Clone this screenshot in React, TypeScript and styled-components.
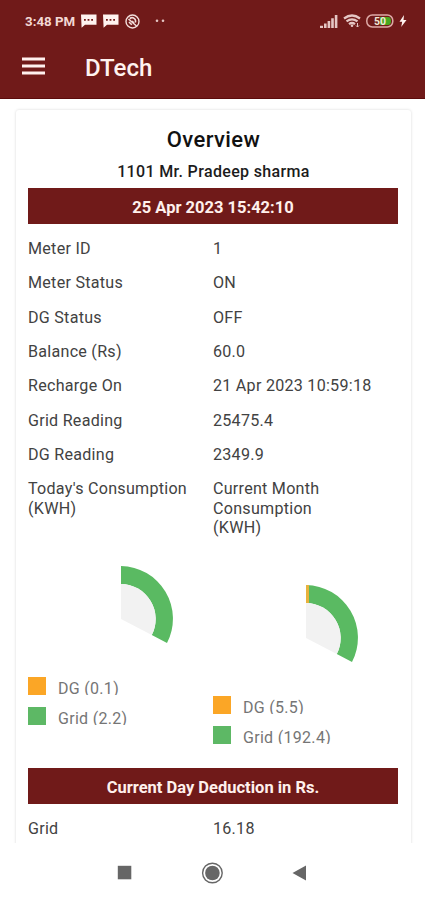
import React from "react";
import styled, { createGlobalStyle } from "styled-components";

const maroon = "#701a19";

const GlobalStyle = createGlobalStyle`
  * { box-sizing: border-box; }
  body { margin: 0; background: #fff; font-family: Roboto, sans-serif; }
`;

const Screen = styled.div`
  width: 425px;
  height: 900px;
  display: flex;
  flex-direction: column;
  overflow: hidden;
  background: #fff;
`;

const Header = styled.header`
  height: 99px;
  flex: none;
  background: ${maroon};
  border-bottom: 1px solid #5c0c0c;
  color: #fff3f0;
`;

const StatusBar = styled.div`
  height: 42px;
  padding: 0 18px 0 25px;
  display: flex;
  align-items: center;
  justify-content: space-between;
`;

const StatusGroup = styled.div<{ $gap: number }>`
  display: flex;
  align-items: center;
  gap: ${(p) => p.$gap}px;
  svg { display: block; }
`;

const Clock = styled.span`
  font-size: 13.3px;
  font-weight: 700;
  line-height: 16px;
  padding-top: 1px;
  color: #f3d8d4;
`;

const Toolbar = styled.div`
  display: flex;
  align-items: center;
  height: 50px;
  padding-left: 22px;
  gap: 40px;
  svg { display: block; margin-bottom: 2px; }
`;

const AppTitle = styled.h1`
  margin: 0;
  padding-top: 1px;
  font-size: 24px;
  line-height: 28px;
  font-weight: 500;
`;

const Content = styled.main`
  height: 744px;
  flex: none;
  padding: 11px 14px 0 16px;
  overflow: hidden;
`;

const Card = styled.section`
  height: 800px;
  padding: 16px 12px 0;
  border-radius: 3px;
  box-shadow: 0 0 3px rgba(0, 0, 0, 0.16);
`;

const CardTitle = styled.h2`
  margin: 0;
  font-size: 22px;
  line-height: 28px;
  font-weight: 500;
  letter-spacing: 0.4px;
  text-align: center;
  color: #111;
`;

const Owner = styled.div`
  margin-top: 8px;
  font-size: 16px;
  line-height: 20px;
  font-weight: 500;
  letter-spacing: 0.35px;
  text-align: center;
  color: #1c1c1c;
`;

const Band = styled.div`
  width: 370px;
  height: 36px;
  background: ${maroon};
  color: #fff0ec;
  font-size: 16.5px;
  line-height: 39px;
  font-weight: 700;
  text-align: center;
`;

const DateBand = styled(Band)`
  margin-top: 6px;
`;

const Row = styled.div`
  display: grid;
  grid-template-columns: 185px 185px;
  padding: 7.45px 0;
  font-size: 16.1px;
  line-height: 19.5px;
  letter-spacing: 0.26px;
  color: #424242;
`;

const Rows = styled.div`
  padding-top: 7.4px;
`;

const Multiline = styled.span`
  white-space: pre-line;
`;

const Charts = styled.div`
  display: grid;
  grid-template-columns: 185px 185px;
  height: 222.6px;
`;

const ChartColumn = styled.div<{ $offset: number }>`
  padding-top: ${(p) => p.$offset}px;
`;

const Donut = styled.svg`
  display: block;
  margin-left: 92.6px;
`;

const Legend = styled.div`
  display: flex;
  flex-direction: column;
  gap: 12px;
  margin-top: 31px;
`;

const LegendItem = styled.div`
  display: flex;
  height: 18px;
  gap: 12px;
`;

const Swatch = styled.span<{ $color: string }>`
  width: 18px;
  height: 18px;
  background: ${(p) => p.$color};
`;

const LegendText = styled.span`
  height: 18px;
  padding-top: 2.4px;
  overflow: hidden;
  font-size: 16px;
  line-height: 19px;
  letter-spacing: 0.3px;
  color: #757575;
`;

const NavBar = styled.nav`
  height: 57px;
  flex: none;
  display: flex;
  justify-content: space-between;
  align-items: center;
  padding: 2px 118px 0 117px;
  background: #fff;
  svg { display: block; }
`;

const readings = [
  ["Meter ID", "1"],
  ["Meter Status", "ON"],
  ["DG Status", "OFF"],
  ["Balance (Rs)", "60.0"],
  ["Recharge On", "21 Apr 2023 10:59:18"],
  ["Grid Reading", "25475.4"],
  ["DG Reading", "2349.9"],
  ["Today's Consumption\n(KWH)", "Current Month\nConsumption\n(KWH)"],
];

const MessageIcon = () => (
  <svg width="16" height="14" viewBox="0 0 16 14">
    <path d="M0 .5H15.5V10.8H4L.6 13.8Z" fill="#fff3f0" />
    <path d="M3 5.8H12.5" stroke={maroon} strokeWidth="1.7" strokeDasharray="1.8 1.8" />
  </svg>
);

const BlockedIcon = () => (
  <svg width="15" height="15" viewBox="0 0 15 15" fill="none" stroke="#f3dedb">
    <circle cx="7.5" cy="7.5" r="6.5" strokeWidth="1.4" />
    <path d="M3.5 5L11.5 12M4.8 4.5Q7.5 2.5 10 5.2Q11 7 10.3 8.5M4 8L6.8 10.8M7 7L9 9" strokeWidth="1.6" />
  </svg>
);

const SignalIcon = () => (
  <svg width="18" height="13" viewBox="0 0 18 13" fill="#e5c6c4">
    <path d="M0 10.8H3V13H0ZM4 8.6H6.6V13H4ZM7.6 6H10.2V13H7.6ZM11.2 3.2H13.8V13H11.2ZM14.8 0H17.4V13H14.8Z" />
  </svg>
);

const WifiIcon = () => (
  <svg width="18" height="14" viewBox="0 0 18 14" fill="none" stroke="#e5c6c4" strokeWidth="2.2">
    <path d="M1 4.5Q9-1.5 17 4.5M3.5 7.4Q9 3.2 14.5 7.4M6 10.2Q9 7.8 12 10.2" />
    <circle cx="9" cy="11.8" r="1.3" fill="#e5c6c4" stroke="none" />
    <path d="M14.5 9V13M13 11.5L14.5 13L16 11.5" strokeWidth="1" />
  </svg>
);

const BatteryIcon = () => (
  <svg width="28" height="14" viewBox="0 0 28 14">
    <rect x="0.8" y="1" width="26" height="12" rx="5.5" fill="none" stroke="#dda9a6" strokeWidth="1.5" />
    <path d="M14 3H22Q25 3 25 7T22 11H14Z" fill="#48a820" />
    <text x="14" y="10.8" textAnchor="middle" fontFamily="Roboto, sans-serif" fontSize="10.5" fontWeight="700" fill="#f1e8d8">50</text>
  </svg>
);

const BoltIcon = () => (
  <svg width="8" height="12" viewBox="0 0 8 12">
    <path d="M5 0L.5 6.7H3.2L2.2 12L7.5 5H4.5Z" fill="#fff3f0" />
  </svg>
);

const PieChart = ({ withDg }: { withDg?: boolean }) => (
  <Donut width="54" height="80" viewBox="0 0 54 80">
    <path d="M0 0A52.7 52.7 0 0 1 46 77L30.8 69A35 35 0 0 0 0 18Z" fill="#5aba62" />
    <path d="M0 18A35 35 0 0 1 30.8 69L0 53Z" fill="#f2f2f2" />
    {withDg && <path d="M0 0H3V18H0Z" fill="#e8b23c" />}
  </Donut>
);

const ChartBlock = ({ offset, dg, grid, withDg }: { offset: number; dg: string; grid: string; withDg?: boolean }) => (
  <ChartColumn $offset={offset}>
    <PieChart withDg={withDg} />
    <Legend>
      <LegendItem>
        <Swatch $color="#fba626" />
        <LegendText>DG ({dg})</LegendText>
      </LegendItem>
      <LegendItem>
        <Swatch $color="#5db865" />
        <LegendText>Grid ({grid})</LegendText>
      </LegendItem>
    </Legend>
  </ChartColumn>
);

export default function App() {
  return (
    <>
      <GlobalStyle />
      <Screen>
        <Header>
          <StatusBar>
            <StatusGroup $gap={6}>
              <Clock>3:48 PM</Clock>
              <MessageIcon />
              <MessageIcon />
              <BlockedIcon />
              <svg width="22" height="4" viewBox="0 0 22 4" fill="#e5c6c4">
                <circle cx="11" cy="1.8" r="1.3" />
                <circle cx="17" cy="1.8" r="1.3" />
              </svg>
            </StatusGroup>
            <StatusGroup $gap={5}>
              <SignalIcon />
              <WifiIcon />
              <BatteryIcon />
              <BoltIcon />
            </StatusGroup>
          </StatusBar>
          <Toolbar>
            <svg width="23" height="18" viewBox="0 0 23 18">
              <path d="M0 2H23M0 9H23M0 16H23" stroke="#fff0ee" strokeWidth="2.8" />
            </svg>
            <AppTitle>DTech</AppTitle>
          </Toolbar>
        </Header>
        <Content>
          <Card>
            <CardTitle>Overview</CardTitle>
            <Owner>1101 Mr. Pradeep sharma</Owner>
            <DateBand>25 Apr 2023 15:42:10</DateBand>
            <Rows>
              {readings.map(([label, value]) => (
                <Row key={label}>
                  <Multiline>{label}</Multiline>
                  <Multiline>{value}</Multiline>
                </Row>
              ))}
            </Rows>
            <Charts>
              <ChartBlock offset={20.7} dg="0.1" grid="2.2" />
              <ChartBlock offset={39.7} dg="5.5" grid="192.4" withDg />
            </Charts>
            <Band>Current Day Deduction in Rs.</Band>
            <Rows>
              <Row>
                <span>Grid</span>
                <span>16.18</span>
              </Row>
            </Rows>
          </Card>
        </Content>
        <NavBar>
          <svg width="15" height="15" viewBox="0 0 15 15">
            <rect x="0.8" y="0.8" width="13.5" height="13.5" fill="#666" />
          </svg>
          <svg width="22" height="22" viewBox="0 0 22 22">
            <circle cx="11.4" cy="11" r="9.8" fill="none" stroke="#666" strokeWidth="1.4" />
            <circle cx="11.4" cy="11" r="7.3" fill="#666" />
          </svg>
          <svg width="15" height="16" viewBox="0 0 15 16">
            <path d="M0.5 8L14 0.5V15.5Z" fill="#666" />
          </svg>
        </NavBar>
      </Screen>
    </>
  );
}
